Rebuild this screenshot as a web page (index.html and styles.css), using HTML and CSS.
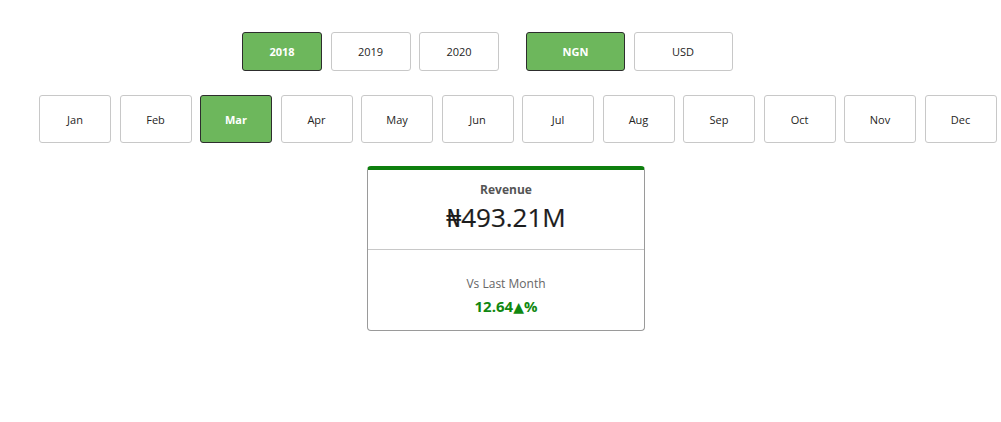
FILE: index.html
```html
<!DOCTYPE html>
<html lang="en">
<head>
<meta charset="utf-8">
<title>Revenue</title>
<link rel="stylesheet" href="styles.css">
</head>
<body>
<div class="page">
  <div class="filters-top">
    <div class="group">
      <button class="btn btn-year active">2018</button>
      <button class="btn btn-year">2019</button>
      <button class="btn btn-year">2020</button>
    </div>
    <div class="group currency">
      <button class="btn btn-cur active">NGN</button>
      <button class="btn btn-cur">USD</button>
    </div>
  </div>
  <div class="months">
    <button class="btn btn-month">Jan</button>
    <button class="btn btn-month">Feb</button>
    <button class="btn btn-month active">Mar</button>
    <button class="btn btn-month">Apr</button>
    <button class="btn btn-month">May</button>
    <button class="btn btn-month">Jun</button>
    <button class="btn btn-month">Jul</button>
    <button class="btn btn-month">Aug</button>
    <button class="btn btn-month">Sep</button>
    <button class="btn btn-month">Oct</button>
    <button class="btn btn-month">Nov</button>
    <button class="btn btn-month">Dec</button>
  </div>
  <div class="card">
    <div class="card-head">
      <div class="card-label">Revenue</div>
      <div class="card-value">₦493.21M</div>
    </div>
    <div class="card-foot">
      <div class="card-sub">Vs Last Month</div>
      <div class="card-change">12.64<span class="arrow">▲</span>%</div>
    </div>
  </div>
</div>
</body>
</html>
```
FILE: styles.css
```css
* { box-sizing: border-box; }

body {
  margin: 0;
  background: #ffffff;
  font-family: "Open Sans", "Noto Sans", sans-serif;
  color: #252423;
}

.page {
  width: 1001px;
  height: 422px;
  padding-top: 32px;
}

.filters-top {
  display: flex;
  padding-left: 242px;
}

.group {
  display: flex;
  gap: 8.5px;
}

.group.currency {
  margin-left: 27px;
}

.btn {
  font-family: inherit;
  font-size: 11px;
  color: #252423;
  background: #ffffff;
  border: 1px solid #c8c8c8;
  border-radius: 3px;
  padding: 0;
  margin: 0;
  display: flex;
  align-items: center;
  justify-content: center;
}

.btn.active {
  background: #6db75c;
  border-color: #2d2d2d;
  color: #ffffff;
  font-weight: 700;
}

.btn-year {
  width: 80px;
  height: 39px;
}

.btn-cur {
  width: 99px;
  height: 39px;
}

.months {
  display: flex;
  gap: 8.5px;
  margin-top: 24px;
  padding-left: 39px;
}

.btn-month {
  width: 72px;
  height: 48px;
}

.card {
  margin-top: 23px;
  margin-left: 367px;
  width: 278px;
  height: 165px;
  border: 1px solid #9a9a9a;
  border-top: 4px solid #0e7f0e;
  border-radius: 4px;
  display: flex;
  flex-direction: column;
}

.card-head {
  height: 80px;
  border-bottom: 1px solid #c8c8c8;
  display: flex;
  flex-direction: column;
  align-items: center;
  padding-top: 11px;
}

.card-label {
  font-size: 12px;
  font-weight: 700;
  color: #555555;
  line-height: 18px;
}

.card-value {
  font-size: 26px;
  line-height: 34px;
  color: #1c1c1c;
  margin-top: 1px;
  -webkit-text-stroke: 0.2px #1c1c1c;
}

.card-foot {
  flex: 1;
  display: flex;
  flex-direction: column;
  align-items: center;
  padding-top: 25px;
}

.card-sub {
  font-size: 12px;
  color: #666666;
  line-height: 18px;
}

.card-change {
  font-size: 15px;
  font-weight: 700;
  color: #118811;
  line-height: 20px;
  margin-top: 3px;
}

.card-change .arrow {
  font-family: "DejaVu Sans", sans-serif;
  font-weight: 400;
  font-size: 14px;
}
```
